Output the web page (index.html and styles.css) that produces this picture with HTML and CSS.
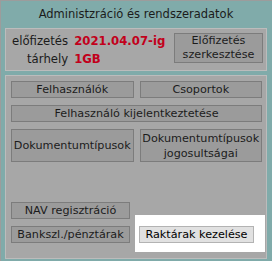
FILE: index.html
```html
<!DOCTYPE html>
<html lang="hu">
<head>
  <meta charset="UTF-8">
  <title>Adminisztráció</title>
  <link rel="stylesheet" href="styles.css">
</head>
<body>
  <div class="frame">
    <div class="title">Administzráció és rendszeradatok</div>

    <div class="box sub">
      <table class="info">
        <tr><td class="lbl">előfizetés</td><td class="val">2021.04.07-ig</td></tr>
        <tr><td class="lbl">tárhely</td><td class="val">1GB</td></tr>
      </table>
      <button class="btn sub-btn">Előfizetés<br>szerkesztése</button>
    </div>

    <div class="box menu">
      <div class="grid">
        <button class="btn">Felhasználók</button>
        <button class="btn">Csoportok</button>
        <button class="btn wide">Felhasználó kijelentkeztetése</button>
        <button class="btn tall">Dokumentumtípusok</button>
        <button class="btn tall">Dokumentumtípusok<br>jogosultságai</button>
      </div>

      <div class="bottom">
        <div class="left-col">
          <button class="btn">NAV regisztráció</button>
          <button class="btn">Bankszl./pénztárak</button>
        </div>
        <div class="spot">
          <button class="btn lit">Raktárak kezelése</button>
        </div>
      </div>
    </div>
  </div>
</body>
</html>
```

FILE: styles.css
```css
body {
  margin: 0;
  font-family: "DejaVu Sans", Verdana, sans-serif;
  font-size: 11.5px;
  color: #1b1b1b;
}
.frame {
  width: 272px;
  height: 261px;
  box-sizing: border-box;
  border: 1px solid #9c9c9c;
  border-right: none;
  border-bottom: none;
  background-color: #80abaa;
  padding: 0 5px 2px 4px;
  display: flex;
  flex-direction: column;
}
.title {
  text-align: center;
  font-size: 11.5px;
  line-height: 16px;
  padding: 5px 0 6px;
}
.box {
  background-color: #a7a7a7;
  border: 1px solid #bcbcbc;
}
.sub {
  height: 43px;
  box-sizing: border-box;
  display: flex;
  justify-content: space-between;
  align-items: flex-start;
  margin-bottom: 4px;
}
.info {
  border-collapse: collapse;
  margin: 3px 0 0 6px;
}
.info td {
  padding: 0;
  line-height: 18px;
  font-size: 11.7px;
}
.lbl {
  text-align: right;
  padding-right: 6px !important;
}
.val {
  color: #c2001b;
  font-weight: bold;
}
.btn {
  font-family: inherit;
  font-size: 11.2px;
  color: #1b1b1b;
  background-color: #9b9b9b;
  border: 1px solid #7c7c7c;
  padding: 0;
  margin: 0;
  line-height: 15px;
  text-align: center;
  white-space: nowrap;
  overflow: hidden;
}
.sub-btn {
  width: 89px;
  height: 30px;
  line-height: 14px;
  margin: 4px 3px 0 0;
}
.menu {
  flex: 1;
  padding: 5px 4px 6px 5px;
  display: flex;
  flex-direction: column;
  justify-content: space-between;
}
.grid {
  display: grid;
  grid-template-columns: minmax(0, 1fr) minmax(0, 1fr);
  column-gap: 6px;
  row-gap: 7px;
}
.grid .btn {
  height: 17px;
}
.grid .wide {
  grid-column: 1 / 3;
}
.grid .tall {
  height: 33px;
  line-height: 15px;
}
.bottom {
  display: flex;
  align-items: flex-end;
  gap: 5px;
}
.left-col {
  display: flex;
  flex-direction: column;
  gap: 7px;
  padding-bottom: 9px;
}
.left-col .btn {
  width: 119px;
  height: 17px;
}
.spot {
  background-color: #ffffff;
  padding: 11px 11px 9px 4px;
  margin-right: -3px;
}
.lit {
  width: 115px;
  height: 17px;
  background-color: #e1e1e1;
  border-color: #b3b3b3;
  color: #000000;
}
```
